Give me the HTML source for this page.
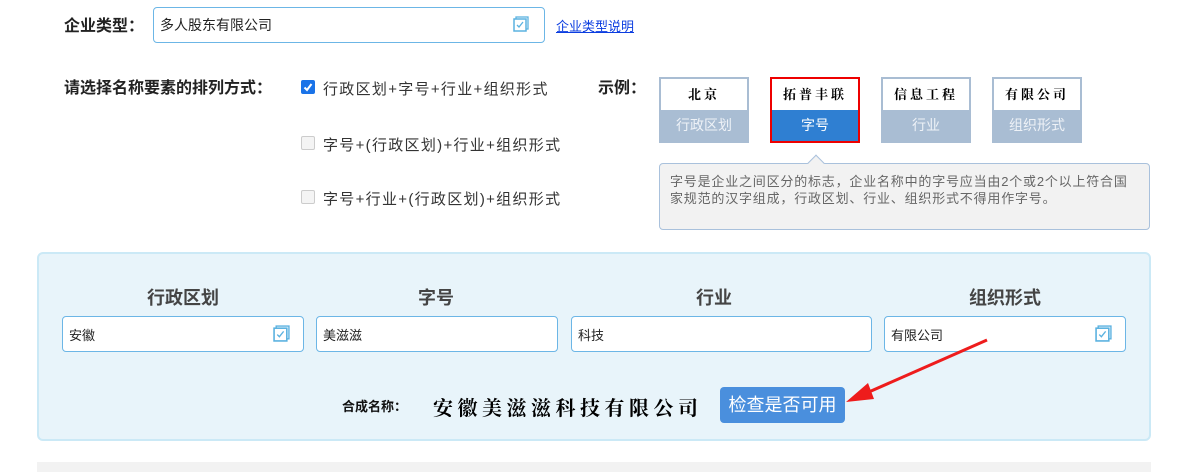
<!DOCTYPE html>
<html><head><meta charset="utf-8"><style>
*{box-sizing:border-box;margin:0;padding:0}
body{width:1186px;height:472px;background:#fff;position:relative;overflow:hidden;font-family:"Liberation Sans","Noto Sans CJK SC",sans-serif;color:#333}
.a{position:absolute;white-space:nowrap}
.b{font-weight:bold;font-size:16px;color:#222;font-family:"Noto Sans CJK SC",sans-serif;line-height:22px}
.inp{position:absolute;border:1px solid #6cb6e6;border-radius:4px;background:#fff;font-size:13px;color:#222;padding-left:6px;display:flex;align-items:center}
.ic{position:absolute;width:16px;height:16px}
.cb{position:absolute;width:14px;height:14px;border:1px solid #ccc;border-radius:2px;background:#f4f4f4}
.lab{font-size:15px;color:#333;letter-spacing:1.3px}
.ex{position:absolute;top:77px;width:90px;height:66px;border:2px solid #a9bdd3;background:#fff}
.ex .t{height:31px;text-align:center;line-height:31px;font-family:"Liberation Serif","Noto Serif CJK SC",serif;font-weight:bold;font-size:13px;letter-spacing:3px;color:#000}
.ex .u{height:31px;background:#a9bdd3;color:#eef2f7;text-align:center;line-height:31px;font-size:14px}
.h{position:absolute;top:284px;font-size:18px;font-weight:bold;color:#444;transform:translateX(-50%)}
</style></head><body>
<div class="a b" style="left:64px;top:13px">企业类型：</div>
<div class="inp" style="left:153px;top:7px;width:392px;height:36px;font-size:14px">多人股东有限公司</div>
<svg class="ic" style="left:513px;top:16px" viewBox="0 0 16 16"><rect x="3" y="1" width="12" height="12" fill="none" stroke="#5bb2e0" stroke-width="1.3"/><rect x="1" y="3" width="12" height="12" fill="#fff" stroke="#5bb2e0" stroke-width="1.5"/><path d="M4 9l2 2 4-5" fill="none" stroke="#5bb2e0" stroke-width="1.3"/></svg>
<div class="a" style="left:556px;top:16px;font-size:13px;color:#0b3de0;text-decoration:underline">企业类型说明</div>

<div class="a b" style="left:64px;top:75px">请选择名称要素的排列方式：</div>
<div class="cb" style="left:301px;top:80px;background:#1a73e8;border-color:#1a73e8"><svg width="12" height="12" viewBox="0 0 12 12" style="position:absolute;left:0;top:0"><path d="M2.5 6.5l2.5 2.5 4.5-6" fill="none" stroke="#fff" stroke-width="2"/></svg></div>
<div class="a lab" style="left:323px;top:78px">行政区划+字号+行业+组织形式</div>
<div class="cb" style="left:301px;top:136px"></div>
<div class="a lab" style="left:323px;top:134px">字号+(行政区划)+行业+组织形式</div>
<div class="cb" style="left:301px;top:190px"></div>
<div class="a lab" style="left:323px;top:188px">字号+行业+(行政区划)+组织形式</div>

<div class="a b" style="left:598px;top:75px">示例：</div>
<div class="ex" style="left:659px"><div class="t">北京</div><div class="u">行政区划</div></div>
<div class="ex" style="left:770px;border-color:#e00"><div class="t">拓普丰联</div><div class="u" style="background:#2f7fd2;color:#fff">字号</div></div>
<div class="ex" style="left:881px"><div class="t">信息工程</div><div class="u">行业</div></div>
<div class="ex" style="left:992px"><div class="t">有限公司</div><div class="u">组织形式</div></div>

<div class="a" style="left:659px;top:163px;width:491px;height:67px;background:#f2f2f2;border:1px solid #a9c1dc;border-radius:4px;padding:9px 10px;font-size:13px;line-height:17px;color:#666;white-space:normal;letter-spacing:0.8px">字号是企业之间区分的标志，企业名称中的字号应当由2个或2个以上符合国家规范的汉字组成，行政区划、行业、组织形式不得用作字号。</div>
<div class="a" style="left:810px;top:157px;width:12px;height:12px;background:#f2f2f2;border-left:1px solid #a9c1dc;border-top:1px solid #a9c1dc;transform:rotate(45deg)"></div>

<div class="a" style="left:37px;top:252px;width:1114px;height:189px;background:#e8f4fa;border:2px solid #cbe9f6;border-radius:6px"></div>
<div class="h" style="left:183px">行政区划</div>
<div class="h" style="left:436px">字号</div>
<div class="h" style="left:714px">行业</div>
<div class="h" style="left:1005px">组织形式</div>
<div class="inp" style="left:62px;top:316px;width:242px;height:36px">安徽</div>
<div class="inp" style="left:316px;top:316px;width:242px;height:36px">美滋滋</div>
<div class="inp" style="left:571px;top:316px;width:301px;height:36px">科技</div>
<div class="inp" style="left:884px;top:316px;width:242px;height:36px">有限公司</div>
<svg class="ic" style="left:273px;top:325px;width:17px;height:17px" viewBox="0 0 16 16"><rect x="3" y="1" width="12" height="12" fill="none" stroke="#5bb2e0" stroke-width="1.3"/><rect x="1" y="3" width="12" height="12" fill="#fff" stroke="#5bb2e0" stroke-width="1.5"/><path d="M4 9l2 2 4-5" fill="none" stroke="#5bb2e0" stroke-width="1.3"/></svg>
<svg class="ic" style="left:1095px;top:325px;width:17px;height:17px" viewBox="0 0 16 16"><rect x="3" y="1" width="12" height="12" fill="none" stroke="#5bb2e0" stroke-width="1.3"/><rect x="1" y="3" width="12" height="12" fill="#fff" stroke="#5bb2e0" stroke-width="1.5"/><path d="M4 9l2 2 4-5" fill="none" stroke="#5bb2e0" stroke-width="1.3"/></svg>

<div class="a" style="left:342px;top:397px;font-size:13px;font-weight:bold;color:#111;font-family:'Noto Sans CJK SC',sans-serif;line-height:18px">合成名称：</div>
<div class="a" style="left:433px;top:392px;font-size:20px;font-weight:bold;letter-spacing:4.5px;font-family:'Liberation Serif','Noto Serif CJK SC',serif;color:#000">安徽美滋滋科技有限公司</div>
<div class="a" style="left:720px;top:387px;width:125px;height:36px;background:#4a8fdd;border-radius:4px;color:#fff;font-size:18px;text-align:center;line-height:36px">检查是否可用</div>
<svg class="a" style="left:840px;top:335px" width="155" height="75" viewBox="0 0 155 75"><path d="M147 5L22 60" stroke="#ee1c1c" stroke-width="3"/><path d="M6 67L28 48 34 64z" fill="#ee1c1c"/></svg>

<div class="a" style="left:37px;top:462px;width:1114px;height:10px;background:#f2f2f2"></div>
</body></html>
